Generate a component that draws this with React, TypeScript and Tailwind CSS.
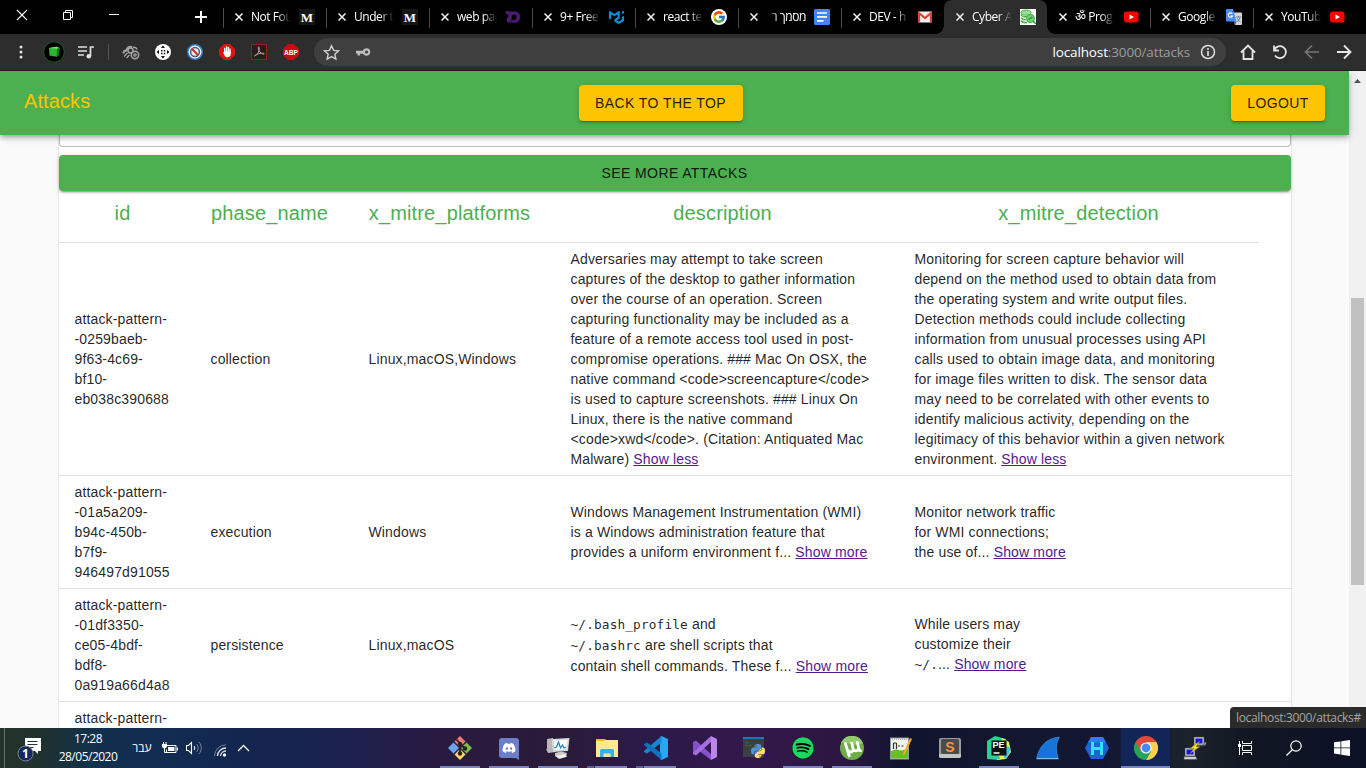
import React from "react";
import { FaDiscord, FaPython, FaSpotify } from "react-icons/fa";
import { FcGoogle } from "react-icons/fc";
import { SiMui } from "react-icons/si";

/* ---------- favicons ---------- */

const MediumIcon = () => (
  <span className="flex h-4 w-4 items-center justify-center bg-[#161616] font-['Liberation_Serif',serif] text-[13px] leading-none font-bold text-white">M</span>
);

const PurpleIcon = () => (
  <svg viewBox="0 0 16 16" className="h-4 w-4">
    <path d="M.5 2.500C2 1.500 3.500 2.500 5 2.500H9.500C13 2.500 15 4.500 15 8s-2 5.800-5.500 5.800H7V11h1.500c2 0 3-1 3-3s-1-2.500-2.500-2.500c-1.500 0-2.300.8-2.300 2.300v5.700H2V10L3.500 6.500C2.500 5.500.5 5.500.5 2.500Z" fill="#4a1b6e" />
  </svg>
);

const DocsIcon = () => (
  <svg viewBox="0 0 16 16" className="h-4 w-4">
    <rect width="16" height="16" rx="1.500" fill="#4285f4" />
    <path d="M3 4h10M3 7.800h10M3 11.800h6.500" stroke="#fff" strokeWidth="1.700" />
  </svg>
);

const GmailIcon = () => (
  <svg viewBox="0 0 16 16" className="h-4 w-4">
    <rect x="1" y="2.500" width="14" height="11" rx="1" fill="#f1eeee" />
    <path d="M2 13.500V4l6 5 6-5v9.500" fill="none" stroke="#d9453a" strokeWidth="2.200" />
  </svg>
);

const CyberIcon = () => (
  <svg viewBox="0 0 16 16" className="h-4 w-4">
    <rect width="16" height="16" fill="#fff" />
    <ellipse cx="6" cy="3.600" rx="5" ry="2.500" fill="#9bdc9b" stroke="#45b549" />
    <path d="M1 5.500c1 2 4 2.500 6 2M1 8.500c1 2 3 2.500 5 2M1 11.500c1 1.800 3 2.500 6 2" fill="none" stroke="#45b549" strokeWidth="1.600" />
    <circle cx="10.500" cy="9.500" r="3.800" fill="#7fd083" stroke="#45b549" strokeWidth="1.300" />
    <path d="M8.500 10.500l4-2.500M13 12l3 3" stroke="#2f9e3b" strokeWidth="1.500" />
  </svg>
);

const YouTubeIcon = () => (
  <svg viewBox="0 0 16 16" className="h-4 w-4">
    <rect x="1" y="2.500" width="14.500" height="11" rx="2.500" fill="#f00" />
    <path d="M6.500 5.500v5L11 8Z" fill="#fff" />
  </svg>
);

const TranslateIcon = () => (
  <svg viewBox="0 0 16 16" className="h-4 w-4">
    <path d="M6 3.500h9a1 1 0 0 1 1 1V15a1 1 0 0 1-1 1H9Z" fill="#d5d5d5" />
    <path d="M1 0h6l3.500 12.500H1a1 1 0 0 1-1-1V1a1 1 0 0 1 1-1Z" fill="#4a8bf5" />
    <path d="M8 12.500h2.500L9 16Z" fill="#3459b5" />
    <path d="M6.300 4.800A2.200 2.200 0 1 0 6.500 7H4.500" fill="none" stroke="#fff" strokeWidth="1.100" />
    <path d="M10 8h5M12.500 7v1M14 8c-.5 2.500-2 4-3.200 5M11.300 9.500c.7 1.600 2 2.800 3.200 3.500" fill="none" stroke="#5f7d96" strokeWidth=".9" />
  </svg>
);

type Tab = { title: string; icon: React.ReactNode; active?: boolean; rtl?: boolean; line?: boolean };

const tabs: Tab[] = [
  { title: "Not Fou", icon: <MediumIcon />, line: true },
  { title: "Under t", icon: <MediumIcon />, line: true },
  { title: "web pag", icon: <PurpleIcon />, line: true },
  { title: "9+ Free", icon: <SiMui className="h-[15px] w-[15px] text-[#0a8fdc]" />, line: true },
  { title: "react te", icon: <span className="rounded-full bg-white p-px"><FcGoogle className="h-3.5 w-3.5" /></span>, line: true },
  { title: "מסמך ר", icon: <DocsIcon />, rtl: true, line: true },
  { title: "DEV - h", icon: <GmailIcon />, line: true },
  { title: "Cyber A", icon: <CyberIcon />, active: true },
  { title: "ॐ Prog", icon: <YouTubeIcon /> },
  { title: "Google", icon: <TranslateIcon />, line: true },
  { title: "YouTub", icon: <YouTubeIcon />, line: true },
];

const TabItem = ({ tab }: { tab: Tab }) => (
  <div className={`relative flex h-[34px] w-[103px] shrink-0 items-center pl-3 ${tab.active ? "rounded-t-lg bg-[#2d2d2d]" : ""}`}>
    {tab.line && <i className="absolute top-2 left-0 h-5 w-px bg-[#4b4b4b]" />}
    {tab.active && (
      <>
        <i className="absolute bottom-0 -left-2 h-2 w-2 bg-[radial-gradient(circle_at_0_0,#000_7.500px,#2d2d2d_8px)]" />
        <i className="absolute -right-2 bottom-0 h-2 w-2 bg-[radial-gradient(circle_at_100%_0,#000_7.500px,#2d2d2d_8px)]" />
      </>
    )}
    <svg viewBox="0 0 8 8" className="mr-2 h-2 w-2 shrink-0">
      <path d="M.5.5l7 7m0-7l-7 7" stroke="#f4f4f4" strokeWidth="1.500" />
    </svg>
    <span
      dir={tab.rtl ? "rtl" : "ltr"}
      className={`w-10 shrink-0 overflow-hidden text-[12px] leading-5 tracking-[-0.450px] whitespace-nowrap text-white ${
        tab.rtl ? "[mask-image:linear-gradient(to_left,black_70%,transparent)]" : "[mask-image:linear-gradient(to_right,black_65%,transparent)]"
      }`}
    >
      {tab.title}
    </span>
    <span className="ml-2 flex h-4 w-4 shrink-0 items-center justify-center">{tab.icon}</span>
  </div>
);

const TabStrip = () => (
  <div className="flex h-[34px] overflow-hidden bg-black">
    <div className="flex w-[223px] shrink-0 items-start pt-2">
      <svg viewBox="0 0 12 12" className="mt-px ml-4 h-3 w-3"><path d="M1 1l10 10M11 1L1 11" stroke="#fff" strokeWidth="1.100" /></svg>
      <svg viewBox="0 0 12 12" className="mt-px ml-[34px] h-3 w-3"><path d="M1.500 3.500h7v7h-7zM3.500 3.500v-2h7v7h-2" fill="none" stroke="#fff" /></svg>
      <svg viewBox="0 0 12 12" className="ml-[34px] h-3 w-3"><path d="M1 6.500h10" stroke="#fff" /></svg>
      <svg viewBox="0 0 12 12" className="mt-[3px] ml-[75px] h-3 w-3"><path d="M6 0v12M0 6h12" stroke="#fff" strokeWidth="2" /></svg>
    </div>
    {tabs.map((t, i) => <TabItem key={i} tab={t} />)}
  </div>
);

/* ---------- toolbar ---------- */

const Slot = ({ children }: { children: React.ReactNode }) => (
  <span className="flex h-8 w-8 shrink-0 items-center justify-center">{children}</span>
);

const Toolbar = () => (
  <div className="flex h-[37px] items-center border-b border-[#1d1d1d] bg-[#2d2d2d] pl-[5px]">
    <Slot>
      <svg viewBox="0 0 4 14" className="h-3.5 w-1"><g fill="#e4e4e4"><circle cx="2" cy="2" r="1.500" /><circle cx="2" cy="7" r="1.500" /><circle cx="2" cy="12" r="1.500" /></g></svg>
    </Slot>
    <Slot>
      <svg viewBox="0 0 22 22" className="ml-0.5 h-[22px] w-[22px] shrink-0">
        <circle cx="11" cy="11" r="10.300" fill="#000" stroke="#1c5a22" />
        <path d="M6 7l7.500-1.300 3 1.300-.7 7-2.300 1.700-7-1.200Z" fill="#2cb52d" />
        <path d="M6 7l7.500-1.300 3 1.300-2.500.8Z" fill="#67ef60" />
        <path d="M14 7.800l2.500-.8-.7 7-2.300 1.700Z" fill="#147b18" />
      </svg>
    </Slot>
    <Slot>
      <svg viewBox="0 0 18 16" className="ml-0.5 h-4 w-[18px]">
        <path d="M1 3h9M1 7h9M1 11h6" stroke="#e0e0e0" strokeWidth="1.700" />
        <path d="M13.500 12V3h3.500" fill="none" stroke="#e0e0e0" strokeWidth="1.700" />
        <circle cx="11.800" cy="12.300" r="2.300" fill="#e0e0e0" />
      </svg>
    </Slot>
    <i className="mr-1.5 ml-[7px] h-4 w-px bg-[#555]" />
    <Slot>
      <svg viewBox="0 0 18 16" className="h-4 w-[18px]" fill="none" stroke="#a5a5a5">
        <path d="M1.500 9.500c0-2 1.500-3 3-3C5 3 8 1.800 10 3.500" strokeWidth="2" />
        <path d="M2 12.500l3.500-3.500M4.500 14l3-3" strokeWidth="1.300" />
        <circle cx="8.500" cy="6.500" r="2.500" strokeWidth="1.500" />
        <circle cx="13" cy="11" r="3.700" strokeWidth="1.500" />
        <circle cx="13" cy="11" r="1.200" strokeWidth="1.300" />
        <path d="M11 3.500c2-.5 3.500.5 4 2" strokeWidth="1.500" />
      </svg>
    </Slot>
    <Slot>
      <svg viewBox="0 0 16 16" className="h-4 w-4">
        <circle cx="8" cy="8" r="8" fill="#fff" />
        <path d="M8 1.500l2 2.500H6ZM8 14.500l2-2.500H6ZM1.500 8L4 6v4ZM14.500 8L12 6v4ZM6 6h1.500v1.500H6zM8.800 6h1.500v1.500H8.800zM6 8.800h1.500v1.500H6zM8.800 8.800h1.500v1.500H8.800z" fill="#111" />
      </svg>
    </Slot>
    <Slot>
      <svg viewBox="0 0 16 16" className="h-4 w-4">
        <circle cx="8" cy="8" r="7.200" fill="#fff" stroke="#2f80c9" strokeWidth="1.600" />
        <circle cx="8" cy="8" r="4.400" fill="#e7ecf4" stroke="#4d5a70" strokeWidth="1.500" />
        <path d="M4.700 4.700l6.600 6.600" stroke="#c3342f" strokeWidth="2" />
      </svg>
    </Slot>
    <Slot>
      <svg viewBox="0 0 16 16" className="h-4 w-4">
        <path d="M5 0h6l5 5v6l-5 5H5l-5-5V5Z" fill="#e1120d" />
        <path d="M5.700 9V4.500M7.500 8V3M9.300 8V3.500M11 9V5" stroke="#fff" strokeWidth="1.400" strokeLinecap="round" />
        <path d="M4 8.500c1-.5 1.500.2 2 .8V7.500h5.700V10c0 4-5 4-6 1.700Z" fill="#fff" />
      </svg>
    </Slot>
    <Slot>
      <svg viewBox="0 0 16 16" className="h-4 w-4">
        <rect x=".5" y=".5" width="15" height="15" fill="#2b1b1a" stroke="#8c2418" />
        <path d="M3.500 12c3.500-1.500 5-5 4.700-8.500-.1-1-1.200-1-1 .2C7.700 7 9.500 9.700 12.500 10.200c1 .1.800-1-.3-1C9 9.200 6 9.800 3.500 12Z" fill="none" stroke="#a8a8a8" />
      </svg>
    </Slot>
    <Slot>
      <svg viewBox="0 0 16 16" className="h-4 w-4">
        <path d="M5 0h6l5 5v6l-5 5H5l-5-5V5Z" fill="#c70d0d" />
        <text x="8" y="10.800" textAnchor="middle" fontSize="8" textLength="14" lengthAdjust="spacingAndGlyphs" fontWeight="700" fill="#fff" fontFamily="Liberation Sans, sans-serif">ABP</text>
      </svg>
    </Slot>
    <div className="ml-[7px] flex h-7 w-[912px] shrink-0 items-center rounded-full bg-[#3f3f3f] pr-2.5 pl-px">
      <Slot>
        <svg viewBox="0 0 24 24" className="h-[17px] w-[17px]"><path d="M12 2.500l2.900 6.500 7.100.7-5.300 4.700 1.500 7L12 17.700l-6.200 3.700 1.500-7L2 9.700 9.100 9Z" fill="none" stroke="#cfcfcf" strokeWidth="2" /></svg>
      </Slot>
      <Slot>
        <svg viewBox="0 0 16 8" className="h-2 w-4"><path d="M1 2.700h9v3H5V7.500H2.500V5.500H1Z" fill="#bdbdbd" /><circle cx="11.500" cy="4" r="2.700" fill="none" stroke="#bdbdbd" strokeWidth="2.200" /></svg>
      </Slot>
      <span className="ml-auto text-[13.500px] leading-5 tracking-[-0.140px] whitespace-nowrap text-[#9c9c9c]">
        <span className="text-white">localhost</span>:3000/attacks
      </span>
      <svg viewBox="0 0 16 16" className="ml-2.5 h-4 w-4 shrink-0"><circle cx="8" cy="8" r="6.500" fill="none" stroke="#dedede" strokeWidth="1.500" /><path d="M8 7v5M8 4v1.800" stroke="#dedede" strokeWidth="1.700" /></svg>
    </div>
    <span className="w-1.5 shrink-0" />
    <Slot>
      <svg viewBox="0 0 16 16" className="h-4 w-4"><path d="M1 8.500L8 1.500l7 7M3.500 7v8h9V7" fill="none" stroke="#e4e4e4" strokeWidth="1.800" /></svg>
    </Slot>
    <Slot>
      <svg viewBox="0 0 16 16" className="h-4 w-4"><path d="M2.500 5.500A6 6 0 1 1 3 11.500M2 1.500v5h5" fill="none" stroke="#e4e4e4" strokeWidth="1.800" /></svg>
    </Slot>
    <Slot>
      <svg viewBox="0 0 16 16" className="h-4 w-4"><path d="M15 8H2M8 1.500L1.500 8 8 14.500" fill="none" stroke="#777" strokeWidth="1.700" /></svg>
    </Slot>
    <Slot>
      <svg viewBox="0 0 16 16" className="h-4 w-4"><path d="M1 8h13M8 1.500L14.500 8 8 14.500" fill="none" stroke="#e8e8e8" strokeWidth="1.800" /></svg>
    </Slot>
  </div>
);

/* ---------- page ---------- */

const raised = "shadow-[0_3px_1px_-2px_rgba(0,0,0,0.2),0_2px_2px_0_rgba(0,0,0,0.14),0_1px_5px_0_rgba(0,0,0,0.12)]";

const AppBar = () => (
  <header className="relative z-10 flex h-16 items-start justify-between bg-[#4caf50] px-6 pt-3.5 shadow-[0_2px_4px_-1px_rgba(0,0,0,0.2),0_4px_5px_0_rgba(0,0,0,0.14),0_1px_10px_0_rgba(0,0,0,0.12)]">
    <h6 className="w-[94px] text-[20px] leading-8 tracking-[0.1px] text-[#ffc400]">Attacks</h6>
    <button className={`-ml-[28px] h-9 w-[164px] rounded bg-[#ffc400] text-sm tracking-[0.430px] text-black/87 ${raised}`}>BACK TO THE TOP</button>
    <button className={`h-9 w-[94px] rounded bg-[#ffc400] text-sm tracking-[0.4px] text-black/87 ${raised}`}>LOGOUT</button>
  </header>
);

const ShowLink = ({ children }: { children: string }) => <a href="#" className="text-[#551a8b] underline">{children}</a>;
const Code = ({ children }: { children: string }) => (
  <code className="font-['DejaVu_Sans_Mono',monospace] text-[12.750px] leading-[14px]">{children}</code>
);

type Row = {
  id: string[];
  phase: string;
  platforms: string;
  description: React.ReactNode[];
  detection: React.ReactNode[];
  tall?: boolean;
};

const rows: Row[] = [
  {
    id: ["attack-pattern-", "-0259baeb-", "9f63-4c69-", "bf10-", "eb038c390688"],
    phase: "collection",
    platforms: "Linux,macOS,Windows",
    description: [
      "Adversaries may attempt to take screen",
      "captures of the desktop to gather information",
      "over the course of an operation. Screen",
      "capturing functionality may be included as a",
      "feature of a remote access tool used in post-",
      "compromise operations. ### Mac On OSX, the",
      "native command <code>screencapture</code>",
      "is used to capture screenshots. ### Linux On",
      "Linux, there is the native command",
      "<code>xwd</code>. (Citation: Antiquated Mac",
      <>Malware) <ShowLink>Show less</ShowLink></>,
    ],
    detection: [
      "Monitoring for screen capture behavior will",
      "depend on the method used to obtain data from",
      "the operating system and write output files.",
      "Detection methods could include collecting",
      "information from unusual processes using API",
      "calls used to obtain image data, and monitoring",
      "for image files written to disk. The sensor data",
      "may need to be correlated with other events to",
      "identify malicious activity, depending on the",
      "legitimacy of this behavior within a given network",
      <>environment. <ShowLink>Show less</ShowLink></>,
    ],
  },
  {
    id: ["attack-pattern-", "-01a5a209-", "b94c-450b-", "b7f9-", "946497d91055"],
    phase: "execution",
    platforms: "Windows",
    description: [
      "Windows Management Instrumentation (WMI)",
      "is a Windows administration feature that",
      <>provides a uniform environment f... <ShowLink>Show more</ShowLink></>,
    ],
    detection: ["Monitor network traffic", "for WMI connections;", <>the use of... <ShowLink>Show more</ShowLink></>],
  },
  {
    id: ["attack-pattern-", "-01df3350-", "ce05-4bdf-", "bdf8-", "0a919a66d4a8"],
    phase: "persistence",
    platforms: "Linux,macOS",
    description: [
      <><Code>~/.bash_profile</Code> and</>,
      <><Code>~/.bashrc</Code> are shell scripts that</>,
      <>contain shell commands. These f... <ShowLink>Show more</ShowLink></>,
    ],
    detection: ["While users may", "customize their", <><Code>~/.</Code>... <ShowLink>Show more</ShowLink></>],
    tall: true,
  },
  {
    id: ["attack-pattern-"],
    phase: "",
    platforms: "",
    description: [],
    detection: [],
  },
];

const Lines = ({ lines, lineClass = "h-5" }: { lines: React.ReactNode[]; lineClass?: string }) => (
  <>{lines.map((l, i) => <div key={i} className={`${lineClass} whitespace-nowrap`}>{l}</div>)}</>
);

const head = "h-[52px] border-b border-[#e0e0e0] pt-1.5 pl-4 align-top text-[20px] leading-8 font-normal tracking-[0.15px] text-[#4caf50]";
const cell = "py-1.5 pl-4 align-middle";

const AttackTable = () => (
  <table className="w-full table-fixed border-separate border-spacing-0 text-sm leading-5 tracking-[0.15px] text-black/87">
    <colgroup>
      <col className="w-[136px]" />
      <col className="w-[158px]" />
      <col className="w-[202px]" />
      <col className="w-[344px]" />
      <col className="w-[360px]" />
      <col className="w-8" />
    </colgroup>
    <thead>
      <tr>
        <th className={`${head} pr-6`}>id</th>
        <th className={`${head} pr-6`}>phase_name</th>
        <th className={`${head} pr-6`}>x_mitre_platforms</th>
        <th className={`${head} pr-6`}>description</th>
        <th className={`${head} pr-4`}>x_mitre_detection</th>
        <th />
      </tr>
    </thead>
    <tbody className="[&_td]:border-b [&_td]:border-[#e0e0e0]">
      {rows.map((r, i) => (
        <tr key={i}>
          <td className={cell}><Lines lines={r.id} /></td>
          <td className={cell}>{r.phase}</td>
          <td className={cell}>{r.platforms}</td>
          <td className={cell}><Lines lines={r.description} lineClass={r.tall ? "h-[21px]" : "h-5"} /></td>
          <td className={r.tall ? "pt-1.5 pb-2 pl-4 align-middle" : cell}><Lines lines={r.detection} /></td>
          <td />
        </tr>
      ))}
    </tbody>
  </table>
);

const Page = () => (
  <div className="relative flex h-[657px] overflow-hidden bg-[#fafafa] font-['Liberation_Sans',Arial,sans-serif]">
    <div className="w-[1349px] shrink-0">
      <AppBar />
      <main className="mx-auto h-[900px] w-[1232px] bg-white shadow-[0_2px_1px_-1px_rgba(0,0,0,0.2),0_1px_1px_0_rgba(0,0,0,0.14),0_1px_3px_0_rgba(0,0,0,0.12)]">
        <div className="h-3 rounded-b border border-t-0 border-[#bdbdbd]" />
        <button className={`mt-2 h-9 w-full rounded bg-[#4caf50] text-sm tracking-[0.4px] text-black/87 ${raised}`}>SEE MORE ATTACKS</button>
        <AttackTable />
      </main>
    </div>
    <div className="flex w-[17px] flex-col items-center bg-[#f1f1f1]">
      <svg viewBox="0 0 7 4" className="mt-2 h-1 w-[7px]"><path d="M0 4L3.500 0 7 4Z" fill="#505050" /></svg>
      <div className="mt-[215px] h-[287px] w-[13px] bg-[#c1c1c1]" />
    </div>
    <div className="absolute right-0 bottom-0 z-20 h-[21px] w-[136px] rounded-tl bg-[#2b2b2b] pl-1.5 font-['Open_Sans',sans-serif] text-[12px] leading-[21px] tracking-[-0.340px] whitespace-nowrap text-[#a5a5a5]">
      localhost:3000/attacks#
    </div>
  </div>
);

/* ---------- taskbar ---------- */

const box = "h-6 w-6";

const GitIcon = () => (
  <svg viewBox="0 0 24 24" className={box}>
    <path d="M12 0l5.500 5.500L12 11 6.500 5.500Z" fill="#f47a7a" />
    <path d="M18.500 6.500L24 12l-5.500 5.500L13 12Z" fill="#7cc150" />
    <path d="M5.500 6.500L11 12l-5.500 5.500L0 12Z" fill="#6aa5ee" />
    <path d="M12 13l5.500 5.500L12 24l-5.500-5.500Z" fill="#ffd968" />
    <path d="M8.500 3.500L12 7.500V18M12 8l5 4.500" fill="none" stroke="#2a2025" strokeWidth="1.800" />
    <g fill="#2a2025"><circle cx="12" cy="8" r="2.200" /><circle cx="12" cy="17.500" r="2.200" /><circle cx="17" cy="12.500" r="2.200" /></g>
  </svg>
);

const DiscordIcon = () => (
  <span className="relative flex h-5 w-5 items-center justify-center rounded-[3px] bg-[#6b7fc9]">
    <FaDiscord className="h-3.5 w-3.5 text-white" />
    <svg viewBox="0 0 5 3" className="absolute right-0 -bottom-[2px] h-[3px] w-[5px]"><path d="M0 0h5v3Z" fill="#6b7fc9" /></svg>
  </span>
);

const MonitorIcon = () => (
  <svg viewBox="0 0 24 24" className={box}>
    <path d="M1 3l6-1v13l-6-1ZM0 13l8-1 2 4-8 1Z" fill="#b8b8b8" />
    <path d="M5.500 3l18-1-1.500 13-15 1Z" fill="#d6d6d6" />
    <path d="M7.500 4.500l14-.8-1 9.500-12 .8Z" fill="#f4fbff" />
    <path d="M8.500 12l2-1 2-5 2 6 2-3 1.500 3 2-1" fill="none" stroke="#2582c4" strokeWidth="1.200" />
    <path d="M9 17l6-1.500 6 1.500-1 4-7 2-4-3Z" fill="#c9c9c9" /><path d="M10 20l9-2 2 2.500-7 2Z" fill="#f0f0f0" />
  </svg>
);

const FolderIcon = () => (
  <svg viewBox="0 0 24 24" className={box}>
    <path d="M1 3h9l1 1h12v17H1Z" fill="#ffe793" /><path d="M1 3h9v2H1Z" fill="#f2b72f" />
    <path d="M5 21v-6.500a1.500 1.500 0 0 1 1.500-1.500h11a1.500 1.500 0 0 1 1.500 1.500V21h-3.500v-3.500h-7V21Z" fill="#32b2e8" />
  </svg>
);

const CodeIcon = () => (
  <svg viewBox="0 0 24 24" className={box}>
    <path d="M17.500 0L24 3v18l-6.500 3-1.500-1V1Z" fill="#27a9f0" />
    <path d="M17.500 0v6.500L3 17.500 0 16v-1Z" fill="#1389cf" />
    <path d="M17.500 24v-6.500L3 6.500 0 8v1Z" fill="#0f73bd" />
  </svg>
);

const StudioIcon = () => (
  <svg viewBox="0 0 24 24" className={box}>
    <path d="M0 6l3-1.500L18 18v6L3 12.500v4.500l-3 1Z" fill="#8550c7" />
    <path d="M18 0v6L3 19.500 0 18v-1.500Z" fill="#a66de0" />
    <path d="M18 0l6 3v18l-6 3Z" fill="#bb84ed" />
  </svg>
);

const PythonIcon = () => (
  <svg viewBox="0 0 24 24" className={box}>
    <defs>
      <linearGradient id="py" x1="0" y1="0" x2="1" y2="1">
        <stop offset=".5" stopColor="#4f93cc" />
        <stop offset=".5" stopColor="#ffe05c" />
      </linearGradient>
    </defs>
    <path d="M1 1h21v20H1Z" fill="#3b403f" />
    <path d="M1 1h21v2H1Z" fill="#1678be" />
    <path d="M3 6.500h4M3 9.500h7" stroke="#34633c" />
    <FaPython x="8" y="7" width="16" height="17" fill="url(#py)" />
  </svg>
);

const TorrentIcon = () => (
  <svg viewBox="0 0 24 24" className={box}>
    <circle cx="12" cy="12" r="12" fill="#6cad48" />
    <path d="M1 7A12 12 0 0 1 23 7C15 12 7 5 1 7Z" fill="#93ca70" />
    <path d="M5 6.500L9.500 21M7.700 14c2 3.500 6 2 5.300-1.500L11.500 6M17 5l2 8.500c.3 1.500 1 1.500 2.500.5M13 13.500c1.500 2 4.500 1.800 5.500-.5" fill="none" stroke="#fff" strokeWidth="2.800" />
  </svg>
);

const NotesIcon = () => (
  <svg viewBox="0 0 24 24" className={box}>
    <rect x="1.500" y="2" width="18" height="21" fill="#f0f6ea" stroke="#9a9a9a" />
    <path d="M2 15l5-1.500 5 1 7-1.500V22.500H2Z" fill="#68bf22" />
    <path d="M3 3h16" stroke="#aaa" strokeDasharray="1 1" strokeWidth="1.500" />
    <path d="M4.500 7v6M7.500 7v6M4.500 7h3M9 10h2M12.500 10h2" stroke="#333" strokeWidth="1.200" />
    <path d="M21 2l2 1-7 15-2 1.500.3-2.500Z" fill="#f8a62c" />
  </svg>
);

const SublimeIcon = () => (
  <svg viewBox="0 0 24 24" className={box}>
    <rect x="1" y="2" width="22" height="20" rx="2" fill="#9b9b9b" />
    <path d="M1 20v-2h22v2a2 2 0 0 1-2 2H3a2 2 0 0 1-2-2Z" fill="#c4c4c4" />
    <rect x="3" y="3" width="18" height="15" rx="1.500" fill="#4b4b4b" />
    <text x="12" y="15.500" textAnchor="middle" fontSize="14" fontWeight="700" fill="#f7933b" fontFamily="Liberation Sans, sans-serif">S</text>
  </svg>
);

const PyCharmIcon = () => (
  <svg viewBox="0 0 24 24" className={box}>
    <path d="M0 5L8 0l11 3 1 19-9 2-11-1Z" fill="#22d58b" />
    <path d="M15 2l7 4 2 10-5 7-9 1Z" fill="#e6ef45" />
    <path d="M20 10l3.500 2-1 5-4 6-3-4Z" fill="#35c6f0" />
    <path d="M1 12l8-3 4 14-12-1Z" fill="#2ccf9d" />
    <rect x="4.500" y="4.500" width="15" height="15" fill="#111" />
    <text x="5.500" y="12.300" fontSize="9" fontWeight="700" fill="#fff" fontFamily="Liberation Sans, sans-serif">PE</text>
    <path d="M6.500 17h6" stroke="#fff" strokeWidth="1.500" />
  </svg>
);

const SharkIcon = () => (
  <svg viewBox="0 0 24 24" className={box}>
    <path d="M.5 23C3 10 11 2 23.500 1 19 8 20 16 22.500 23Z" fill="#1674d8" stroke="#3c9bf0" strokeWidth=".6" />
    <path d="M1 22.500h21" stroke="#8bbfea" />
  </svg>
);

const HexIcon = () => (
  <svg viewBox="0 0 24 24" className={box}>
    <path d="M6 1h12l6 11-6 11H6L0 12Z" fill="#1e63d3" />
    <path d="M6 1h12l3 5.500H3Z" fill="#2f7df0" />
    <path d="M7.500 6v13M16.500 6v13M7.500 12.500h9" stroke="#35e0f7" strokeWidth="3" />
  </svg>
);

const ChromeIcon = () => (
  <svg viewBox="0 0 24 24" className={box}>
    <path d="M12 12L1.600 6A12 12 0 0 0 12 24l5.200-9Z" fill="#27a25b" />
    <path d="M12 6h10.400A12 12 0 0 1 12 24l5.200-9Z" fill="#fed14a" />
    <path d="M1.600 6L6.800 15 12 6h10.400A12 12 0 0 0 1.600 6Z" fill="#e4483b" />
    <circle cx="12" cy="12" r="5.600" fill="#fff" /><circle cx="12" cy="12" r="4.400" fill="#4688f4" />
  </svg>
);

const PuttyIcon = () => (
  <svg viewBox="0 0 24 24" className={box}>
    <g stroke="#444" strokeWidth=".6">
      <path d="M11 1h10v8H11ZM10 9.500h12l1-1.500v-2l-2 1v3H10Z" fill="#cfcfcf" /><path d="M2 12h10v8H2ZM1 20.500h12l1 3H1Z" fill="#cfcfcf" />
    </g>
    <path d="M12.500 2.500h7v5h-7ZM3.500 13.500h7v5h-7Z" fill="#1414e0" />
    <path d="M17 5L7 12.500l4.500-.5L7 17.500l10-7-4 .2Z" fill="#ffee18" stroke="#85770b" strokeWidth=".5" />
  </svg>
);

const apps: { icon: React.ReactNode; open?: boolean; stacked?: boolean; active?: boolean }[] = [
  { icon: <GitIcon />, open: true },
  { icon: <DiscordIcon />, open: true },
  { icon: <MonitorIcon />, open: true },
  { icon: <FolderIcon />, open: true, stacked: true },
  { icon: <CodeIcon />, open: true, stacked: true },
  { icon: <StudioIcon /> },
  { icon: <PythonIcon /> },
  { icon: <span className="rounded-full bg-black"><FaSpotify className="h-[22px] w-[22px] text-[#1ed760]" /></span>, open: true },
  { icon: <TorrentIcon />, open: true },
  { icon: <NotesIcon /> },
  { icon: <SublimeIcon /> },
  { icon: <PyCharmIcon />, open: true },
  { icon: <SharkIcon /> },
  { icon: <HexIcon /> },
  { icon: <ChromeIcon />, active: true },
  { icon: <PuttyIcon /> },
];

const Taskbar = () => (
  <footer className="flex h-10 bg-[linear-gradient(90deg,#243329_0px,#20322f_40px,#11304a_90px,#122d52_150px,#13254f_250px,#1c214f_350px,#291a42_430px,#2b1b38_560px,#2b1a4a_650px,#34184b_750px,#2a1740_850px,#10142f_900px,#12172e_1000px,#111733_1100px,#1b232c_1190px,#111823_1240px,#0b1025_1366px)] text-white">
    <div className="flex w-[435px] shrink-0 items-center">
      <i className="ml-1 h-10 w-px bg-[#66706c]" />
      <svg viewBox="0 0 26 26" className="mt-1 ml-3 h-[26px] w-[26px]">
        <path d="M8 1h16v13h-3v3l-3-3H8Z" fill="#fff" />
        <path d="M10.500 4.500h10M10.500 7.500h10M10.500 10.500h6" stroke="#24333a" />
        <circle cx="8.500" cy="16.500" r="7.500" fill="#16285a" stroke="#7c8793" />
        <text x="8.500" y="21" textAnchor="middle" fontSize="12" fontWeight="700" fill="#fff" fontFamily="Open Sans, sans-serif">1</text>
      </svg>
      <div className="ml-3 w-[66px] text-center text-[12px] leading-[18px] tracking-[-0.500px] whitespace-nowrap">
        <div>17:28</div>
        <div>28/05/2020</div>
      </div>
      <span className="ml-2.5 w-[22px] text-center text-[12px] leading-4 whitespace-nowrap">עבר</span>
      <svg viewBox="0 0 16 12" className="ml-[9px] h-3 w-4"><path d="M4.500 3.500h9.500v7H4.500v-3M15.500 5.500v3" fill="none" stroke="#fff" /><path d="M6 5h6.500v4H6ZM0 2h5v3L3 6.500H2L0 5ZM1 0h1v2H1zM3.500 0h1v2h-1z" fill="#fff" /><path d="M2.500 6v4.500h3" fill="none" stroke="#fff" /></svg>
      <svg viewBox="0 0 16 14" className="ml-2 h-3.5 w-4"><path d="M.5 4.500h2l3-3v11l-3-3h-2Z" fill="none" stroke="#fff" strokeWidth="1.100" /><path d="M8 5c1 1.300 1 2.700 0 4" fill="none" stroke="#fff" /><path d="M10.500 3c2.200 2.600 2.200 5.400 0 8M13 1c3 3.800 3 8.200 0 12" fill="none" stroke="#75829a" /></svg>
      <svg viewBox="0 0 13 13" className="mt-1 ml-3 h-[13px] w-[13px]"><path d="M.5 12A11.500 11.500 0 0 1 12 .8" fill="none" stroke="#73819b" /><path d="M3.500 12A8.500 8.500 0 0 1 12 4M6.500 12A5.500 5.500 0 0 1 12 7" fill="none" stroke="#dfe3ea" strokeWidth="1.300" /><circle cx="10.500" cy="11" r="1.700" fill="#fff" /></svg>
      <svg viewBox="0 0 13 8" className="ml-2.5 h-2 w-[13px]"><path d="M1 7l5.500-5.500L12 7" fill="none" stroke="#fff" strokeWidth="1.300" /></svg>
    </div>
    {apps.map((a, i) => (
      <div key={i} className={`flex w-[49px] shrink-0 flex-col items-center ${a.active ? "bg-[#122557]" : ""}`}>
        <div className="flex h-[38px] items-center pt-0.5">{a.icon}</div>
        {a.active && <i className="h-0.5 w-full bg-[#7885ba]" />}
        {a.open && (
          <span className="flex h-0.5 w-10 bg-[#7885ba]">{a.stacked && <i className="h-0.5 w-2 border-r border-[#303455] bg-[#58618f]" />}</span>
        )}
      </div>
    ))}
    <div className="ml-[3px] flex w-12 items-center justify-center">
      <svg viewBox="0 0 16 16" className="h-4 w-4"><path d="M4.500 1v2.500h9V1M4.500 15v-2.500h9V15M4.500 5.500h9v5h-9ZM1.500 1v3M1.500 7v8" fill="none" stroke="#fff" /><path d="M0 4h3v3H0z" fill="#fff" /></svg>
    </div>
    <div className="flex w-12 items-center justify-center">
      <svg viewBox="0 0 16 16" className="h-4 w-4"><circle cx="10" cy="6" r="5.200" fill="none" stroke="#fff" strokeWidth="1.200" /><path d="M6.300 9.700L.5 15.500" stroke="#fff" strokeWidth="1.300" /></svg>
    </div>
    <div className="flex w-12 items-center justify-center">
      <svg viewBox="0 0 16 16" className="h-4 w-4"><path d="M0 2.300l6.500-.9v6.100H0ZM7.300 1.300L16 0v7.500H7.300ZM0 8.300h6.500v6.200L0 13.600ZM7.300 8.300H16V16l-8.700-1.300Z" fill="#fff" /></svg>
    </div>
  </footer>
);

export default function App() {
  return (
    <div className="h-[768px] w-[1366px] overflow-hidden font-['Open_Sans','Noto_Sans','DejaVu_Sans',sans-serif]">
      <TabStrip />
      <Toolbar />
      <Page />
      <Taskbar />
    </div>
  );
}
